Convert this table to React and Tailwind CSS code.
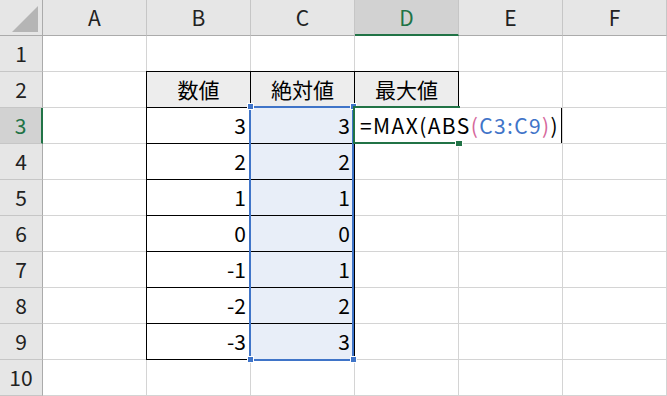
const COLS = ['A', 'B', 'C', 'D', 'E', 'F']
const ROWS = [1, 2, 3, 4, 5, 6, 7, 8, 9, 10]

// cell contents keyed by "col+row"
const DATA = {
  B2: '数値', C2: '絶対値', D2: '最大値',
  B3: '3', B4: '2', B5: '1', B6: '0', B7: '-1', B8: '-2', B9: '-3',
  C3: '3', C4: '2', C5: '1', C6: '0', C7: '1', C8: '2', C9: '3',
}

const FONT = { fontFamily: '"Noto Sans CJK JP", "Noto Sans", sans-serif' }

function inTable(col, row) {
  if (row === 2) return ['B', 'C', 'D'].includes(col)
  return row >= 3 && row <= 9 && (col === 'B' || col === 'C')
}

function Cell({ col, row }) {
  const key = col + row
  const value = DATA[key]
  const isHead = row === 2 && inTable(col, row)
  const isRange = col === 'C' && row >= 3 && row <= 9
  const bg = isHead ? 'bg-[#ededed]' : isRange ? 'bg-[#e8eef8]' : 'bg-white'

  return (
    <div className={`relative flex items-center border-r border-b border-[#d4d4d4] ${bg} ${isHead ? 'justify-center' : 'justify-end pr-[4px]'}`}>
      {inTable(col, row) && (
        <div className="absolute -left-px -top-px w-[105px] h-[37px] border border-black pointer-events-none" />
      )}
      {value && <span className="relative text-[21px] leading-none text-black">{value}</span>}
    </div>
  )
}

export default function App() {
  return (
    <div className="relative w-[667px] h-[396px] overflow-hidden bg-white" style={FONT}>
      <div className="grid grid-cols-[43px_repeat(6,104px)] grid-rows-[36px_repeat(10,36px)]">
        {/* select-all corner */}
        <div className="relative bg-[#e6e6e6] border-r border-b border-[#ababab]">
          <svg className="absolute left-[11px] top-[5px]" width="28" height="28" viewBox="0 0 28 28">
            <polygon points="1,27 27,27 27,1" fill="#b5b5b5" />
          </svg>
        </div>
        {COLS.map(c => (
          <div
            key={c}
            className={`flex items-center justify-center border-r border-[#c6c6c6] text-[21px] leading-none ${c === 'D' ? 'bg-[#d2d2d2] text-[#217346] border-b-2 border-b-[#217346]' : 'bg-[#e6e6e6] text-[#222] border-b border-b-[#ababab]'}`}
          >
            {c}
          </div>
        ))}

        {ROWS.map(r => (
          <div key={r} className="contents">
            <div
              className={`flex items-center justify-center border-b border-[#c6c6c6] text-[21px] leading-none ${r === 3 ? 'bg-[#d2d2d2] text-[#217346] border-r-2 border-r-[#217346]' : 'bg-[#e6e6e6] text-[#222] border-r border-r-[#ababab]'}`}
            >
              {r}
            </div>
            {COLS.map(c => <Cell key={c + r} col={c} row={r} />)}
          </div>
        ))}
      </div>

      {/* referenced range C3:C9 */}
      <div className="absolute left-[249px] top-[106px] w-[105px] h-[255px] border-2 border-[#3f74c8] pointer-events-none">
        <span className="absolute left-[-4px] top-[-5px] w-[7px] h-[7px] bg-[#3f74c8] border border-white" />
        <span className="absolute left-[99px] top-[-5px] w-[7px] h-[7px] bg-[#3f74c8] border border-white" />
        <span className="absolute left-[-4px] top-[248px] w-[7px] h-[7px] bg-[#3f74c8] border border-white" />
        <span className="absolute left-[99px] top-[248px] w-[7px] h-[7px] bg-[#3f74c8] border border-white" />
      </div>

      {/* in-cell editor for D3, text runs over E3 */}
      <div className="absolute left-[355px] top-[108px] w-[206px] h-[35px] bg-white flex items-center pl-[5px] text-[21px] leading-none tracking-[1.4px] text-black whitespace-nowrap">
        <span>=MAX(ABS</span>
        <span className="text-[#d6679c]">(</span>
        <span className="text-[#3f74c8]">C3:C9</span>
        <span className="text-[#d6679c]">)</span>
        <span>)</span>
      </div>
      <div className="absolute left-[561px] top-[108px] w-px h-[35px] bg-black" />

      {/* active cell D3 (right edge hidden while editing) */}
      <div className="absolute left-[353px] top-[106px] w-[107px] h-[38px] border-2 border-r-0 border-[#217346] pointer-events-none">
        <span className="absolute left-[100px] top-[32px] w-[8px] h-[7px] bg-[#217346] border border-white" />
      </div>
    </div>
  )
}
